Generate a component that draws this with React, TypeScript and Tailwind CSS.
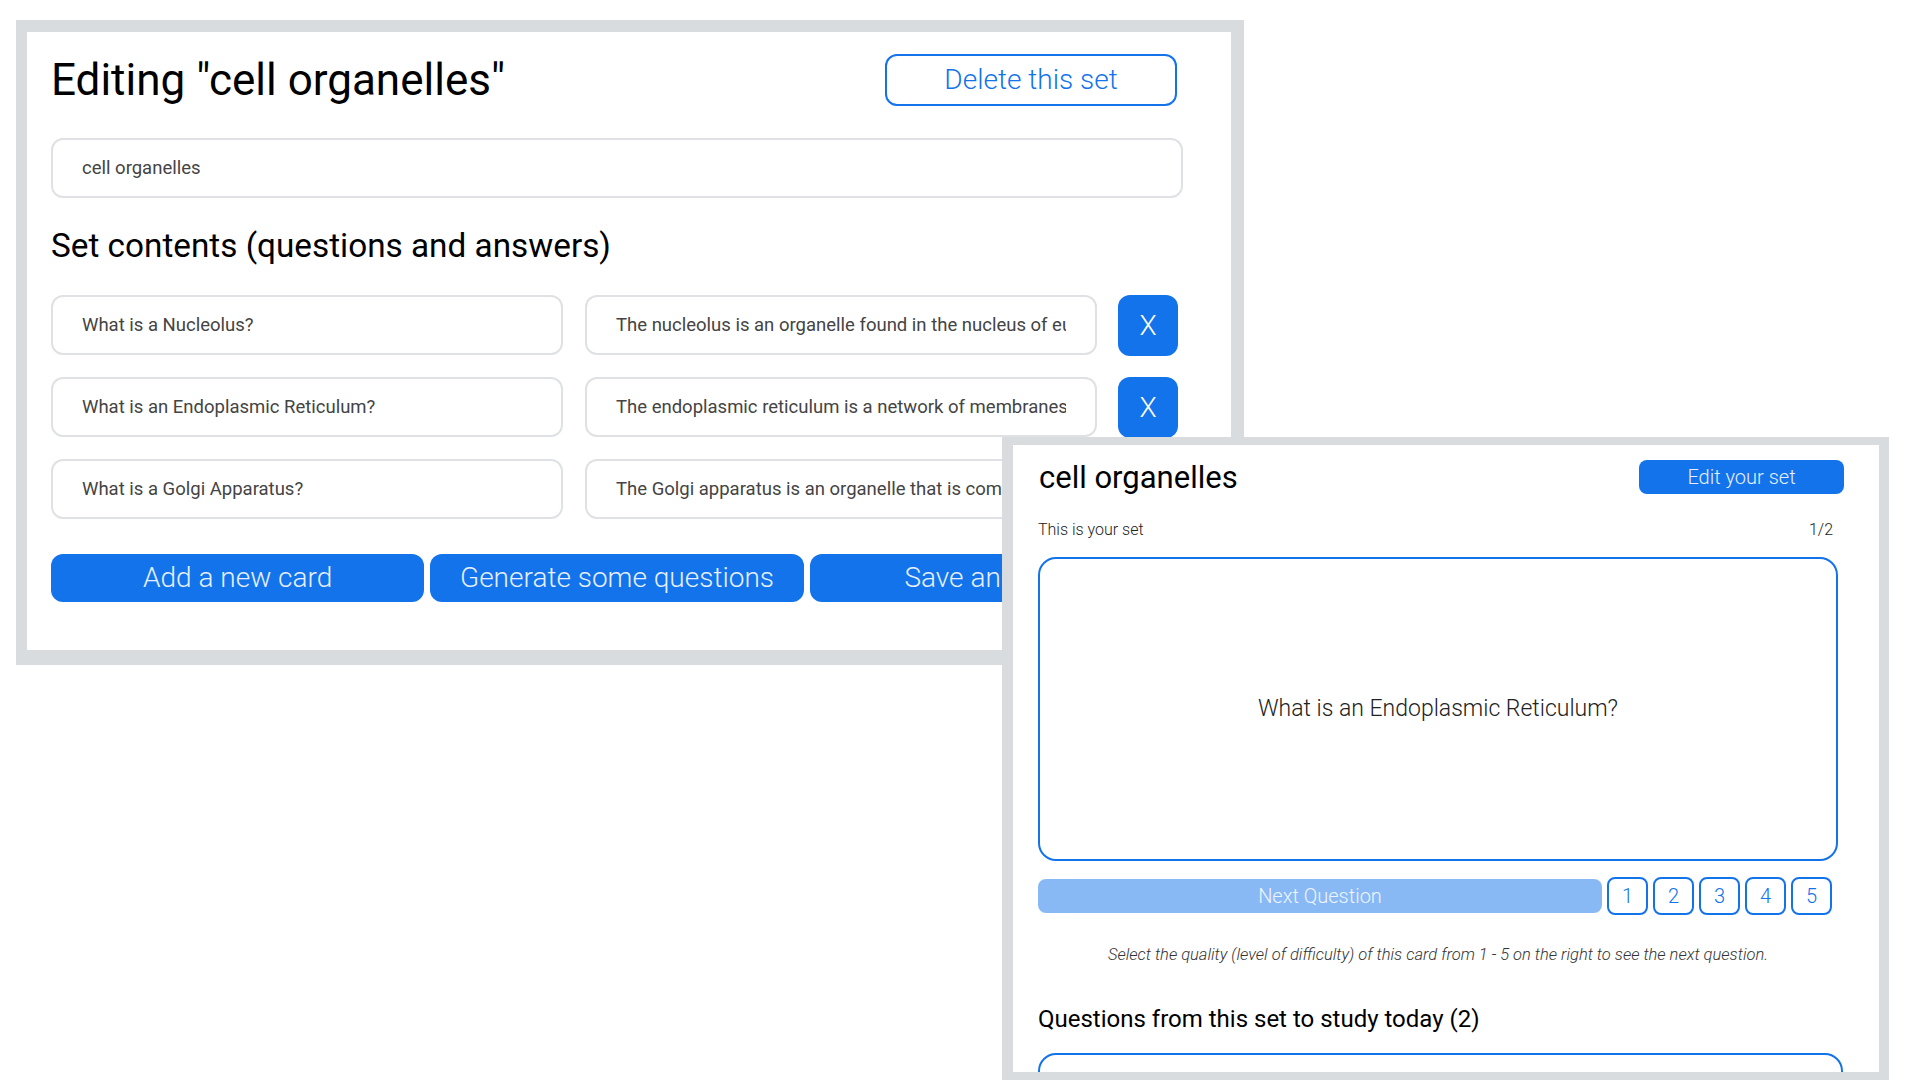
const BLUE = 'bg-[#1273eb]';

const cards = [
  {
    q: 'What is a Nucleolus?',
    a: 'The nucleolus is an organelle found in the nucleus of eukaryotic cells that produces ribosomes.',
  },
  {
    q: 'What is an Endoplasmic Reticulum?',
    a: 'The endoplasmic reticulum is a network of membranes',
  },
  {
    q: 'What is a Golgi Apparatus?',
    a: 'The Golgi apparatus is an organelle that is composed of stacks of flattened sacs.',
  },
];

function TextField({ value, className = '' }: { value: string; className?: string }) {
  return (
    <input
      readOnly
      value={value}
      className={`h-[60px] rounded-[12px] border-2 border-[#dfe1e4] bg-white px-[29px] text-[18.5px] text-[#444] outline-none ${className}`}
    />
  );
}

function EditPanel() {
  return (
    <div className="absolute left-[16px] top-[20px] h-[645px] w-[1228px] border-b-[15px] border-l-[11px] border-r-[13px] border-t-[12px] border-[#d9dcdf] bg-white">
      <div className="pl-[24px] pr-[48px]">
        <div className="mt-[22px] flex h-[52px] items-center justify-between">
          <h1 className="text-[44px] leading-none text-black">Editing "cell organelles"</h1>
          <button className="mr-[6px] h-[52px] w-[292px] rounded-[12px] border-2 border-[#1273eb] text-[28px] font-light text-[#1273eb]">
            Delete this set
          </button>
        </div>

        <TextField value="cell organelles" className="mt-[32px] h-[59px] w-full" />

        <h2 className="mt-[28px] h-[40px] text-[33.3px] leading-[40px] text-black">
          Set contents (questions and answers)
        </h2>

        <div className="mt-[29px] flex flex-col gap-[22px]">
          {cards.map((c) => (
            <div key={c.q} className="flex h-[60px] items-start">
              <TextField value={c.q} className="w-[512px]" />
              <TextField value={c.a} className="ml-[22px] w-[512px]" />
              <button className={`ml-[21px] flex h-[61px] w-[60px] items-center justify-center rounded-[12px] ${BLUE} text-[28px] font-light text-white`}>
                X
              </button>
            </div>
          ))}
        </div>

        <div className="mt-[35px] grid grid-cols-3 gap-[6px]">
          {['Add a new card', 'Generate some questions', 'Save and close'].map((t) => (
            <button key={t} className={`h-[48px] rounded-[12px] ${BLUE} text-[28px] font-light text-[#e6efff]`}>
              {t}
            </button>
          ))}
        </div>
      </div>
    </div>
  );
}

function StudyPanel() {
  return (
    <div className="absolute left-[1002px] top-[437px] h-[643px] w-[887px] overflow-hidden border-b-[8px] border-l-[11px] border-r-[10px] border-t-[8px] border-[#d9dcdf] bg-white">
      <div className="pl-[25px] pr-[35px]">
        <div className="mt-[15px] flex h-[34px] items-center justify-between">
          <h1 className="pl-[1px] text-[31px] leading-none text-black">cell organelles</h1>
          <button className={`h-[34px] w-[205px] rounded-[8px] ${BLUE} text-[20px] font-light text-[#e6efff]`}>
            Edit your set
          </button>
        </div>

        <div className="mt-[24px] flex h-[24px] items-center justify-between pr-[11px] text-[16px] font-light text-[#222]">
          <span>This is your set</span>
          <span>1/2</span>
        </div>

        <div className="mr-[6px] mt-[15px] flex h-[304px] items-center justify-center rounded-[18px] border-2 border-[#1273eb]">
          <p className="text-[23px] font-light text-[#222]">What is an Endoplasmic Reticulum?</p>
        </div>

        <div className="mt-[16px] flex h-[38px] items-center gap-[5px]">
          <button className="h-[34px] w-[564px] rounded-[8px] bg-[#89b9f5] text-[20px] font-light text-[#eef4fe]">
            Next Question
          </button>
          {[1, 2, 3, 4, 5].map((n) => (
            <button
              key={n}
              className="h-[38px] w-[41px] rounded-[8px] border-2 border-[#1273eb] text-[20px] font-light text-[#1273eb]"
            >
              {n}
            </button>
          ))}
        </div>

        <p className="mr-[6px] mt-[30px] text-center text-[16.5px] font-light italic leading-[20px] text-[#333]">
          Select the quality (level of difficulty) of this card from 1 - 5 on the right to see the next question.
        </p>

        <h2 className="mt-[37px] text-[24px] leading-[34px] text-black">
          Questions from this set to study today (2)
        </h2>

        <div className="mt-[17px] h-[200px] w-[805px] rounded-[18px] border-2 border-[#1273eb]" />
      </div>
    </div>
  );
}

export default function App() {
  return (
    <div className="relative h-[1080px] w-[1920px] overflow-hidden bg-white font-[family-name:Roboto,sans-serif]">
      <EditPanel />
      <StudyPanel />
    </div>
  );
}
